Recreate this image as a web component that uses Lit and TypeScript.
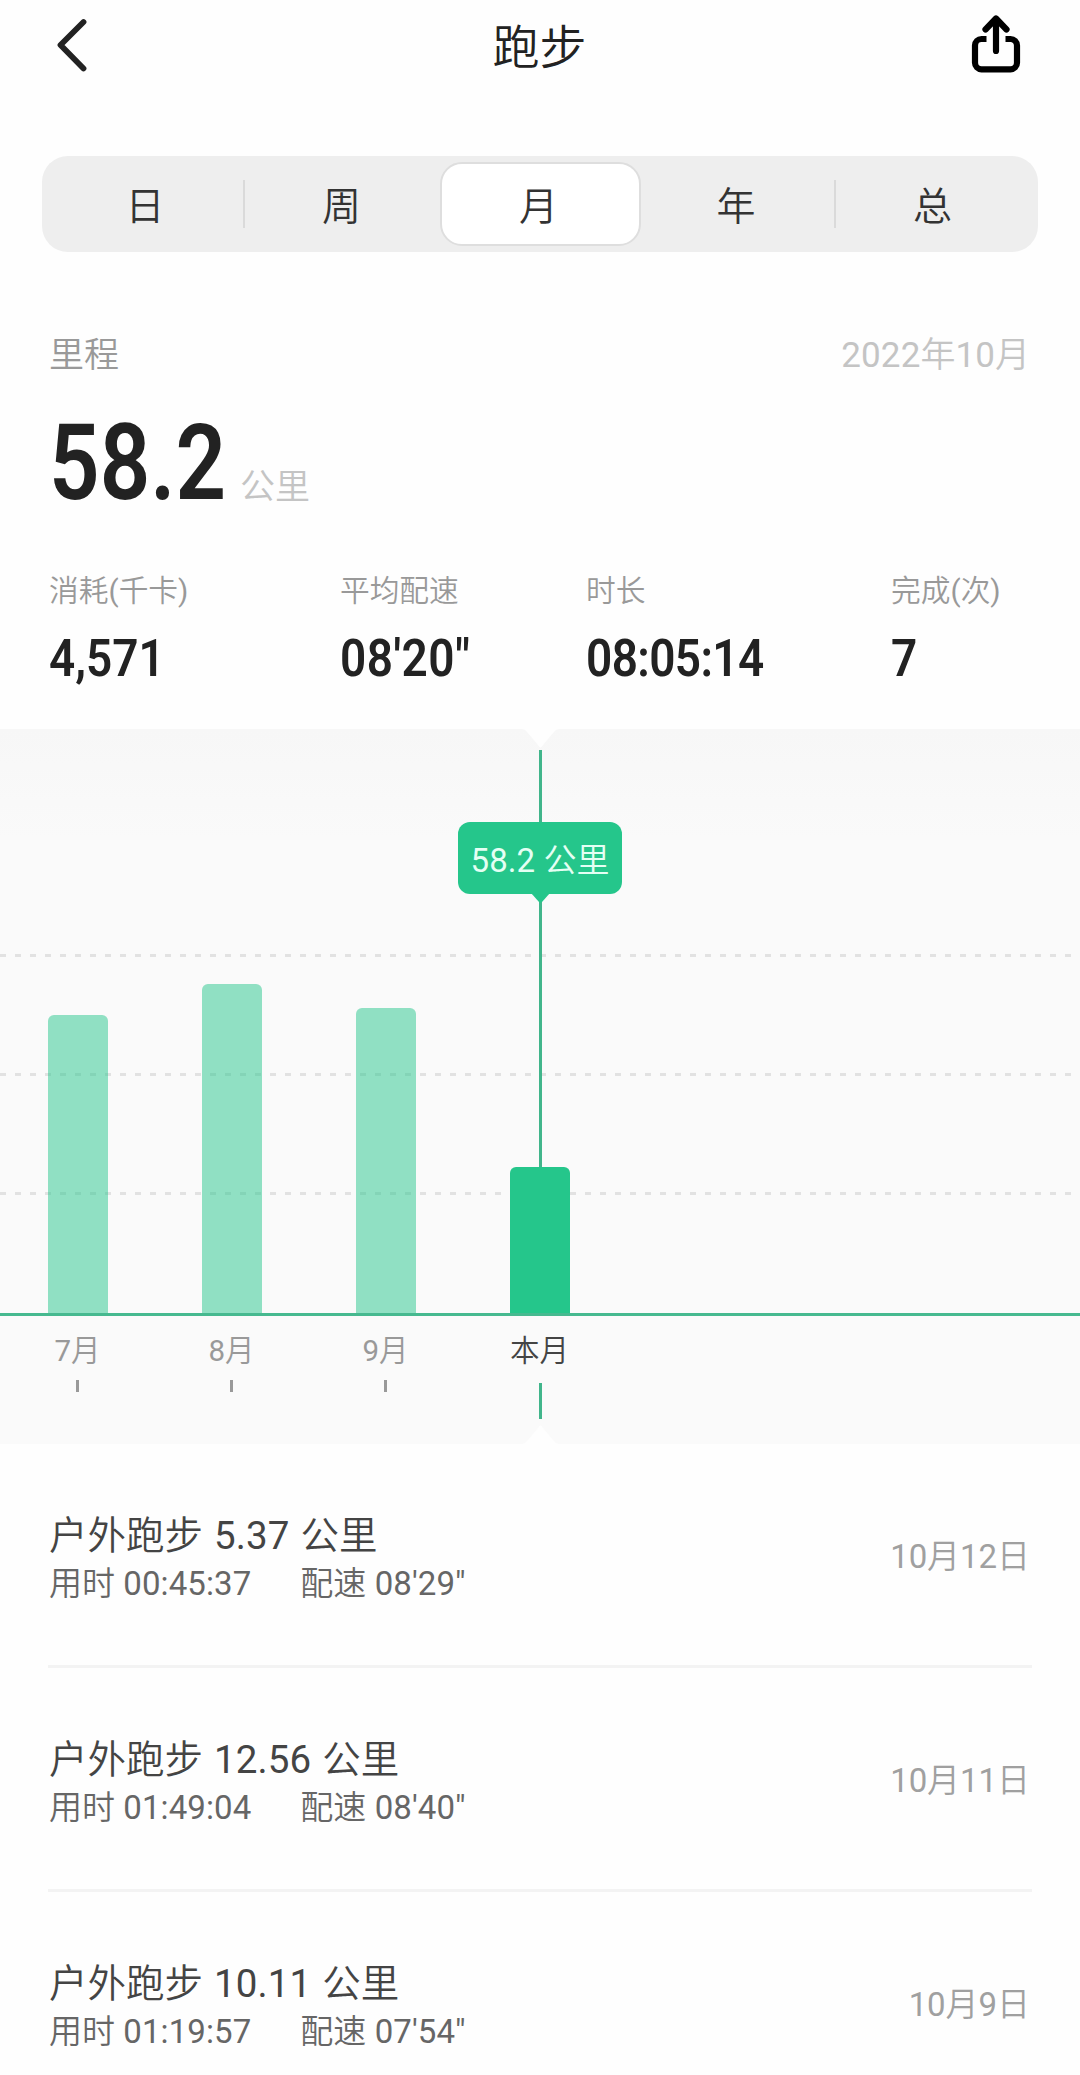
import { LitElement, html, css, svg } from "lit";
import { customElement, state } from "lit/decorators.js";
import { classMap } from "lit/directives/class-map.js";
import { styleMap } from "lit/directives/style-map.js";

interface Month {
  label: string;
  height: number;
  tip?: string;
}

interface Run {
  distance: string;
  time: string;
  pace: string;
  date: string;
}

const TABS = ["日", "周", "月", "年", "总"];

const STATS = [
  { label: "消耗(千卡)", value: "4,571", kind: "" },
  { label: "平均配速", value: "08'20\"", kind: "pace" },
  { label: "时长", value: "08:05:14", kind: "duration" },
  { label: "完成(次)", value: "7", kind: "" },
];

const MONTHS: Month[] = [
  { label: "7月", height: 299 },
  { label: "8月", height: 330 },
  { label: "9月", height: 306 },
  { label: "本月", height: 147, tip: "58.2 公里" },
];

const RUNS: Run[] = [
  { distance: "5.37", time: "00:45:37", pace: "08'29\"", date: "10月12日" },
  { distance: "12.56", time: "01:49:04", pace: "08'40\"", date: "10月11日" },
  { distance: "10.11", time: "01:19:57", pace: "07'54\"", date: "10月9日" },
];

/* Latin runs take a slightly heavier weight than the Chinese runs. */
const mixed = (text: string) =>
  (text.match(/[\x20-\x7e]+|[^\x20-\x7e]+/g) ?? []).map((part) =>
    /^[\x20-\x7e]/.test(part) ? html`<span class="latin">${part}</span>` : part
  );

const latinStyle = css`
  .latin {
    font-weight: 375;
    letter-spacing: 0.1px;
    white-space: pre-wrap;
  }
`;

@customElement("month-chart")
export class MonthChart extends LitElement {
  static styles = [latinStyle, css`
    :host {
      display: block;
      position: relative;
      height: 715px;
      background: linear-gradient(#f7f7f7, #fafafa 110px);
    }
    .plot {
      position: relative;
      box-sizing: border-box;
      height: 585px;
    }
    .bars {
      position: relative;
      box-sizing: border-box;
      height: 100%;
      display: flex;
      align-items: flex-end;
      gap: 94px;
      padding-left: 48px;
    }
    .bar {
      width: 60px;
      border-radius: 6px 6px 0 0;
      background: rgba(37, 198, 139, 0.5);
    }
    .bar.active {
      background: #25c68b;
    }
    .grid {
      position: absolute;
      left: 0;
      width: 1071px;
      height: 3px;
      background: repeating-linear-gradient(90deg, #e2e2e2 0 6px, transparent 6px 15px);
    }
    .g1 { top: 225px; }
    .g2 { top: 344px; }
    .g3 { top: 463px; }
    .axis {
      position: absolute;
      left: 0;
      right: 0;
      bottom: -2px;
      height: 3px;
      background: #46b98f;
    }
    .cursor {
      position: absolute;
      left: 539px;
      top: 21px;
      width: 3px;
      height: 417px;
      background: #41b58b;
    }
    .tip {
      position: absolute;
      left: 458px;
      top: 93px;
      width: 164px;
      height: 72px;
      box-sizing: border-box;
      padding-top: 3px;
      border-radius: 12px;
      background: #25c68b;
      color: #e4fff4;
      font-size: 33px;
      line-height: 72px;
      text-align: center;
      white-space: nowrap;
    }
    .arrow {
      position: absolute;
      left: 531px;
      top: 164px;
      width: 19px;
      height: 10px;
      fill: #25c68b;
    }
    .notch {
      position: absolute;
      left: 522px;
      width: 37px;
      height: 20px;
      fill: #fefefe;
    }
    .notch.top { top: 0; }
    .notch.bottom { bottom: 0; }
    .labels {
      display: flex;
      gap: 54px;
      padding: 17px 0 0 28px;
    }
    .month {
      width: 99px;
      margin-right: 1px;
      display: flex;
      flex-direction: column;
      align-items: center;
      color: #999;
      font-size: 29.5px;
      line-height: 40px;
    }
    .month.active {
      color: #444;
    }
    .tick {
      width: 3px;
      height: 12px;
      margin-top: 9px;
      background: #999;
    }
    .active .tick {
      height: 36px;
      margin-top: 12px;
      margin-left: 2px;
      background: #41b58b;
    }
  `];

  render() {
    return html`
      <div class="plot">
        <div class="grid g1"></div>
        <div class="grid g2"></div>
        <div class="grid g3"></div>
        <div class="bars">
          ${MONTHS.map(
            (m) => html`<div
              class=${classMap({ bar: true, active: !!m.tip })}
              style=${styleMap({ height: `${m.height}px` })}
            ></div>`
          )}
        </div>
        <div class="axis"></div>
        <div class="cursor"></div>
        ${MONTHS.filter((m) => m.tip).map(
          (m) => html`<div class="tip">${mixed(m.tip!)}</div>
            <svg class="arrow" viewBox="0 0 19 10"><path d="M0 0H19L11 9Q9.5 10.5 8 9Z" /></svg>`
        )}
      </div>
      <div class="labels">
        ${MONTHS.map(
          (m) => html`<div class=${classMap({ month: true, active: !!m.tip })}>
            <span>${mixed(m.label)}</span><span class="tick"></span>
          </div>`
        )}
      </div>
      <svg class="notch top" viewBox="0 0 37 20">
        <path d="M0 0Q3 0 5 3L16 16Q18.5 21 21 16L32 3Q34 0 37 0Z" />
      </svg>
      <svg class="notch bottom" viewBox="0 0 37 20">
        <path d="M0 20Q3 20 5 17L16 4Q18.5 -1 21 4L32 17Q34 20 37 20Z" />
      </svg>
    `;
  }
}

@customElement("app-root")
export class AppRoot extends LitElement {
  static styles = [latinStyle, css`
    :host {
      display: block;
      width: 1080px;
      height: 2075px;
      overflow: hidden;
      background: #fefefe;
      color: #222;
      font-family: Roboto, "Noto Sans CJK SC", sans-serif;
      font-weight: 350;
    }
    .header {
      display: grid;
      grid-template-columns: 1fr auto 1fr;
      align-items: center;
      height: 92px;
      padding: 0 57px 0 54px;
    }
    .title {
      font-size: 47px;
      line-height: 88px;
      padding: 4px 0 0 2px;
    }
    .icon {
      display: block;
      fill: none;
      stroke-linejoin: round;
    }
    .back {
      width: 36px;
      height: 60px;
      stroke: #222;
      stroke-width: 5.8;
      stroke-linecap: round;
    }
    .share {
      width: 54px;
      height: 64px;
      justify-self: end;
      stroke: #000;
      stroke-width: 6.2;
    }
    .share-arrow {
      stroke-linecap: round;
    }
    .tabs {
      box-sizing: border-box;
      display: grid;
      grid-template-columns: repeat(5, 197px);
      justify-content: center;
      align-items: center;
      height: 96px;
      margin: 64px 42px 0;
      border-radius: 26px;
      background: #eee;
      color: #333;
      font-size: 39px;
    }
    .tab {
      box-sizing: border-box;
      height: 48px;
      line-height: 55px;
      padding-right: 3px;
      text-align: center;
    }
    .tab.ruled {
      padding-right: 0;
      border-right: 2px solid #dadada;
    }
    .tab.selected {
      height: 84px;
      line-height: 87px;
      margin: 0 -2px;
      border: 2px solid #dedede;
      border-radius: 22px;
      background: #fff;
    }
    .summary {
      height: 477px;
      box-sizing: border-box;
      padding: 79px 50px 0 49px;
    }
    .row {
      display: flex;
      justify-content: space-between;
      font-size: 35px;
      line-height: 50px;
      color: #999;
    }
    .period {
      color: #c4c4c4;
    }
    .total {
      display: flex;
      align-items: baseline;
      margin-top: 20px;
      height: 140px;
      line-height: 124px;
    }
    .figure {
      width: 191px;
      font-size: 105.5px;
      font-weight: 620;
      transform: scaleX(0.84);
      transform-origin: left;
      white-space: nowrap;
    }
    .unit {
      font-size: 35px;
      color: #c4c4c4;
    }
    .stats {
      display: grid;
      grid-template-columns: 291px 246px 305px 1fr;
      margin-top: 29px;
    }
    .label {
      font-size: 29.7px;
      line-height: 42px;
      color: #999;
      white-space: nowrap;
    }
    .value {
      margin-top: 15px;
      font-size: 52.5px;
      line-height: 62px;
      font-weight: 620;
      white-space: nowrap;
      transform: scaleX(0.875);
      transform-origin: left;
    }
    .value.pace {
      letter-spacing: 0.6px;
    }
    .value.duration {
      letter-spacing: -0.7px;
    }
    .run {
      box-sizing: border-box;
      display: flex;
      justify-content: space-between;
      align-items: center;
      height: 224px;
      margin: 0 48px;
      padding: 0 2px 0 1px;
      border-bottom: 3px solid #f3f3f3;
    }
    .info {
      padding-top: 5px;
    }
    .name {
      font-size: 38.5px;
      line-height: 54px;
      color: #444;
      word-spacing: 1.3px;
    }
    .detail {
      display: flex;
      gap: 49px;
      margin-top: -1px;
      font-size: 33px;
      line-height: 44px;
      color: #666;
    }
    .date {
      padding-bottom: 1px;
      font-size: 33px;
      color: #a0a0a0;
    }
    .date .latin {
      letter-spacing: -0.1px;
    }
  `];

  @state() private selected = "月";

  render() {
    return html`
      <div class="header">
        <svg class="icon back" viewBox="0 0 36 60">
          <path d="M29.5 6L6.5 29L29.5 52.500" />
        </svg>
        <div class="title">跑步</div>
        <svg class="icon share" viewBox="0 0 54 64">
          ${svg`<path d="M17.500 25H12.500a6.500 6.500 0 0 0-6.500 6.500v17.300a6.500 6.500 0 0 0 6.500 6.500h29a6.500 6.500 0 0 0 6.500-6.500V31.500a6.500 6.500 0 0 0-6.500-6.500h-5" />
          <path class="share-arrow" d="M27 37V6M16.500 15.500L27 4.500L37.500 15.500" />`}
        </svg>
      </div>

      <div class="tabs">
        ${TABS.map(
          (t, i) => html`<div
            class=${classMap({
              tab: true,
              selected: t === this.selected,
              ruled: i === 0 || i === 3,
            })}
            @click=${() => (this.selected = t)}
          >${t}</div>`
        )}
      </div>

      <div class="summary">
        <div class="row"><span>里程</span><span class="period">${mixed("2022年10月")}</span></div>
        <div class="total"><span class="figure">58.2</span><span class="unit">公里</span></div>
        <div class="stats">
          ${STATS.map(
            (s) => html`<div>
              <div class="label">${mixed(s.label)}</div>
              <div class="value ${s.kind}">${s.value}</div>
            </div>`
          )}
        </div>
      </div>

      <month-chart></month-chart>

      ${RUNS.map(
        (r) => html`<div class="run">
          <div class="info">
            <div class="name">${mixed(`户外跑步 ${r.distance} 公里`)}</div>
            <div class="detail">
              <span>${mixed(`用时 ${r.time}`)}</span><span>${mixed(`配速 ${r.pace}`)}</span>
            </div>
          </div>
          <div class="date">${mixed(r.date)}</div>
        </div>`
      )}
    `;
  }
}
